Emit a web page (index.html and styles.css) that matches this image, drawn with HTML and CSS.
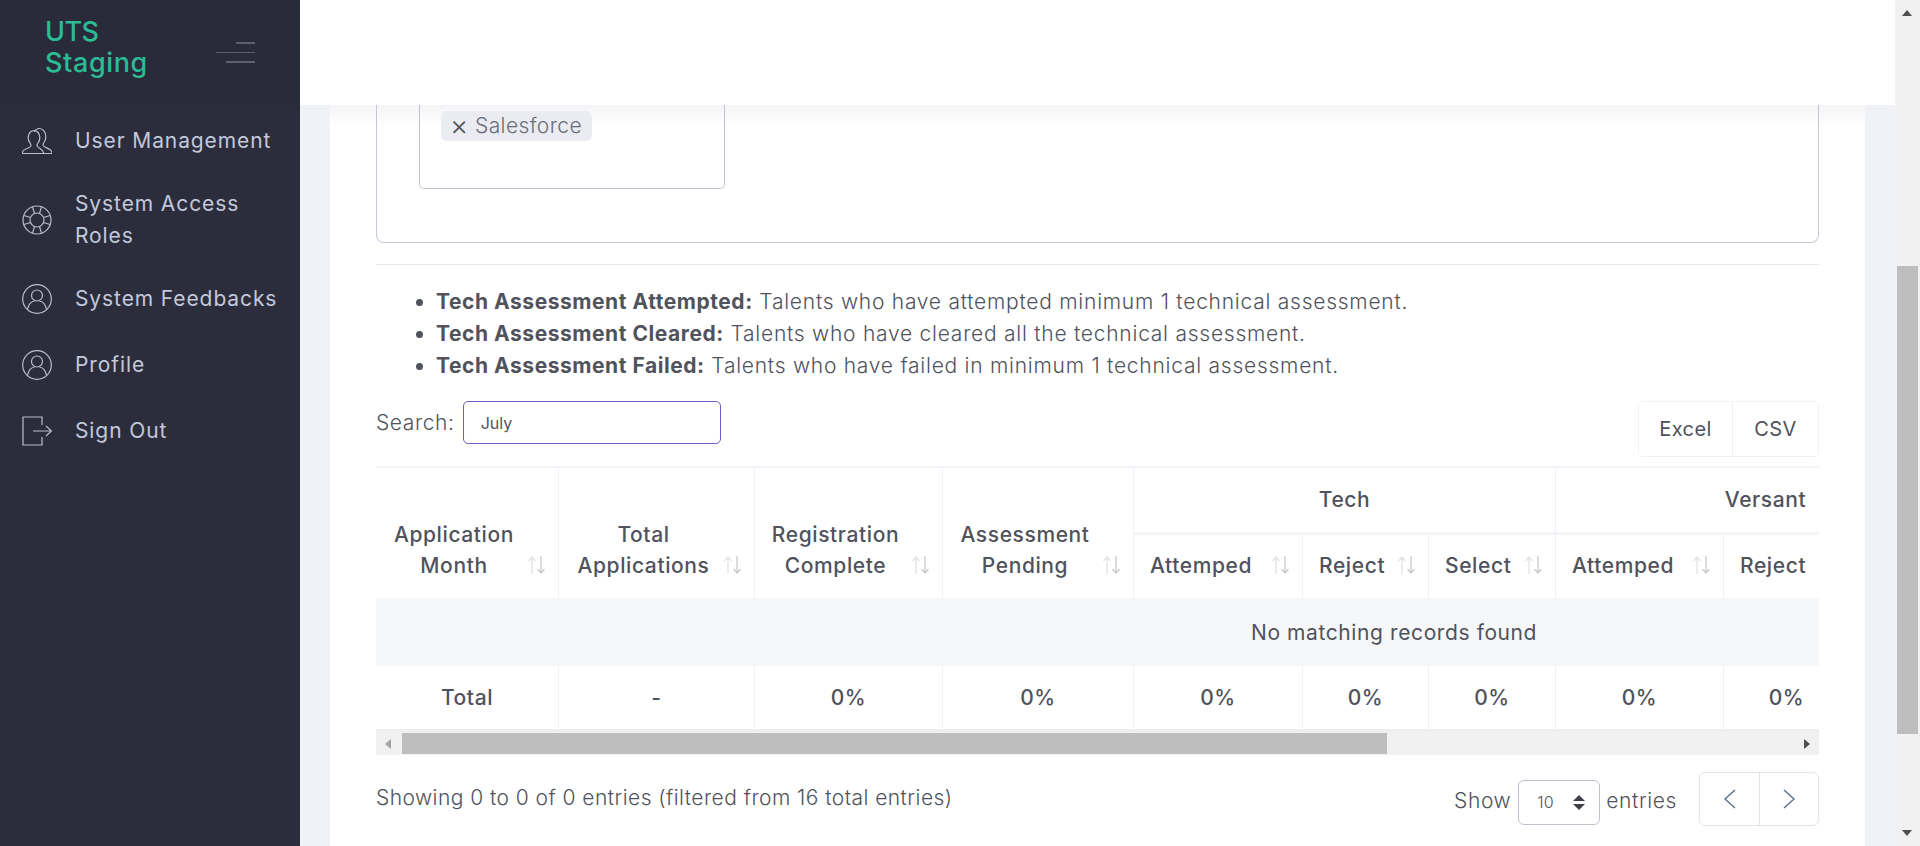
FILE: index.html
```html
<!DOCTYPE html>
<html lang="en">
<head>
    <meta charset="UTF-8">
    <title>UTS Staging</title>
    <link rel="stylesheet" href="styles.css">
</head>
<body>
    <svg class="defs" width="0" height="0">
        <symbol id="sort" viewBox="0 0 20 20">
            <path d="M5 19V2M1.5 6 5 2l3.500 4" fill="none" stroke="#e2e3e6" stroke-width="1.300"/>
            <path d="M14 1v17M10.500 14l3.500 4 3.500-4" fill="none" stroke="#c8c9cd" stroke-width="1.300"/>
        </symbol>
        <symbol id="user" viewBox="0 0 30 30">
            <circle cx="15" cy="15" r="14.300" fill="none" stroke="currentColor" stroke-width="1.200"/>
            <circle cx="15" cy="11.500" r="5.500" fill="none" stroke="currentColor" stroke-width="1.200"/>
            <path d="M5.500 25.500c1-5.500 4-8 7-8.500M24.500 25.500c-1-5.500-4-8-7-8.500" fill="none" stroke="currentColor" stroke-width="1.200"/>
        </symbol>
    </svg>

    <aside class="sidebar">
        <div class="brand">
            <div class="brand-name"><span class="brand-short">UTS</span><br>Staging</div>
            <div class="burger"><i class="b1"></i><i class="b2"></i><i class="b3"></i></div>
        </div>
        <nav class="nav">
            <a class="nav-item">
                <svg class="nav-icon" viewBox="0 0 30 30" fill="none" stroke="currentColor" stroke-width="1.200">
                    <path d="M.5 27.500h29.500v-1.500c-.5-3-7-4-8.500-6-.8-1.200-.3-2.500.5-3.500 1.200-1.500 1.800-3.500 1.800-6 0-4.500-2.800-8-6.300-8-2.200 0-4.200 1.300-5.300 3.400"/>
                    <path d="M.5 27.500V26c.5-3 6.500-3.500 8-5.500.8-1.200.3-2.500-.5-3.500-1.200-1.500-1.800-3.300-1.800-5.500C6.200 7.500 8.800 4.500 12 4.500s5.800 3 5.800 7c0 2.200-.6 4-1.800 5.500-.8 1-1.300 2.300-.5 3.500 1.500 2 5.500 2.500 6.500 7"/>
                </svg>
                <span>User Management</span>
            </a>
            <a class="nav-item">
                <svg class="nav-icon" viewBox="0 0 30 30" fill="none" stroke="currentColor" stroke-width="1.200">
                    <circle cx="15" cy="15" r="14"/>
                    <circle cx="15" cy="15" r="7"/>
                    <path d="M10.500 1.800 12.500 8.500M19.500 1.800 17.500 8.500M10.500 28.200 12.500 21.500M19.500 28.200 17.500 21.500M1.800 10.500 8.500 12.500M1.800 19.500 8.500 17.500M28.200 10.500 21.500 12.500M28.200 19.500 21.500 17.500"/>
                </svg>
                <span>System Access<br>Roles</span>
            </a>
            <a class="nav-item">
                <svg class="nav-icon"><use href="#user"/></svg>
                <span>System Feedbacks</span>
            </a>
            <a class="nav-item">
                <svg class="nav-icon"><use href="#user"/></svg>
                <span>Profile</span>
            </a>
            <a class="nav-item">
                <svg class="nav-icon" viewBox="0 0 30 30" fill="none" stroke="currentColor" stroke-width="1.200">
                    <path d="M20 9V1H1v28h19v-8"/>
                    <path d="M11 15h18M24 10l5.500 5-5.500 5"/>
                </svg>
                <span>Sign Out</span>
            </a>
        </nav>
    </aside>

    <div class="main">
        <header class="topbar"></header>
        <div class="content">
            <section class="card">
                <div class="filter-box">
                    <div class="multi-select">
                        <span class="chip"><span class="chip-x">×</span> Salesforce</span>
                    </div>
                </div>
                <hr class="rule">
                <ul class="legend">
                    <li><b>Tech Assessment Attempted:</b> Talents who have attempted minimum 1 technical assessment.</li>
                    <li><b>Tech Assessment Cleared:</b> Talents who have cleared all the technical assessment.</li>
                    <li><b>Tech Assessment Failed:</b> Talents who have failed in minimum 1 technical assessment.</li>
                </ul>

                <div class="toolbar">
                    <label class="search">Search:
                        <input class="search-input" type="text" value="July">
                    </label>
                    <div class="btn-group">
                        <button class="btn btn-excel">Excel</button>
                        <button class="btn">CSV</button>
                    </div>
                </div>

                <div class="table-wrap">
                    <table class="report">
                        <colgroup>
                            <col class="c183"><col class="c196"><col class="c188"><col class="c191">
                            <col class="c169"><col class="c126"><col class="c127">
                            <col class="c168"><col class="c126"><col class="c126">
                            <col class="c436">
                        </colgroup>
                        <thead>
                            <tr>
                                <th rowspan="2"><div class="th-in"><span>Application<br>Month</span><svg class="sort"><use href="#sort"/></svg></div></th>
                                <th rowspan="2"><div class="th-in"><span>Total<br>Applications</span><svg class="sort"><use href="#sort"/></svg></div></th>
                                <th rowspan="2"><div class="th-in"><span>Registration<br>Complete</span><svg class="sort"><use href="#sort"/></svg></div></th>
                                <th rowspan="2"><div class="th-in"><span>Assessment<br>Pending</span><svg class="sort"><use href="#sort"/></svg></div></th>
                                <th colspan="3" class="group">Tech</th>
                                <th colspan="3" class="group">Versant</th>
                                <th rowspan="2"></th>
                            </tr>
                            <tr>
                                <th class="sub"><div class="th-in"><span>Attemped</span><svg class="sort"><use href="#sort"/></svg></div></th>
                                <th class="sub"><div class="th-in"><span>Reject</span><svg class="sort"><use href="#sort"/></svg></div></th>
                                <th class="sub"><div class="th-in"><span>Select</span><svg class="sort"><use href="#sort"/></svg></div></th>
                                <th class="sub"><div class="th-in"><span>Attemped</span><svg class="sort"><use href="#sort"/></svg></div></th>
                                <th class="sub"><div class="th-in"><span>Reject</span><svg class="sort"><use href="#sort"/></svg></div></th>
                                <th class="sub"><div class="th-in"><span>Select</span><svg class="sort"><use href="#sort"/></svg></div></th>
                            </tr>
                        </thead>
                        <tbody>
                            <tr class="empty"><td colspan="11">No matching records found</td></tr>
                        </tbody>
                        <tfoot>
                            <tr>
                                <td>Total</td><td>-</td><td>0%</td><td>0%</td>
                                <td>0%</td><td>0%</td><td>0%</td>
                                <td>0%</td><td>0%</td><td>0%</td><td></td>
                            </tr>
                        </tfoot>
                    </table>
                </div>
                <div class="h-scroll">
                    <span class="arrow-left"></span>
                    <div class="h-thumb"></div>
                    <span class="arrow-right"></span>
                </div>

                <div class="foot">
                    <div class="info">Showing 0 to 0 of 0 entries (filtered from 16 total entries)</div>
                    <div class="foot-right">
                        <span>Show</span>
                        <div class="len-select"><span>10</span><span class="updown"><i class="up"></i><i class="down"></i></span></div>
                        <span>entries</span>
                        <div class="pager">
                            <a class="page-btn"><svg width="14" height="20" viewBox="0 0 14 20" fill="none" stroke="currentColor" stroke-width="1.400"><path d="M12 1 2 10l10 9"/></svg></a>
                            <a class="page-btn"><svg width="14" height="20" viewBox="0 0 14 20" fill="none" stroke="currentColor" stroke-width="1.400"><path d="m2 1 10 9-10 9"/></svg></a>
                        </div>
                    </div>
                </div>
            </section>
        </div>
    </div>

    <div class="v-scroll">
        <span class="arrow-up"></span>
        <div class="v-thumb"></div>
        <span class="arrow-down"></span>
    </div>
</body>
</html>
```

FILE: styles.css
```css
*{
    margin: 0;
    padding: 0;
    box-sizing: border-box;
}
html,body{
    height: 100%;
    overflow: hidden;
}
body{
    display: flex;
    background: #f1f2f8;
    color: #50525c;
    font-family: "Inter", "Noto Sans", sans-serif;
    font-size: 21px;
    letter-spacing: .6px;
    line-height: 32px;
}
.defs{
    position: absolute;
}

/* sidebar */
.sidebar{
    width: 300px;
    flex: none;
    background: #2c2d3c;
}
.brand{
    height: 105px;
    padding: 16px 45px 0;
    display: flex;
    justify-content: space-between;
    background: #2a2b3a;
}
.brand-name{
    color: #2bbb95;
    font-size: 27px;
    line-height: 31px;
    font-weight: 500;
    letter-spacing: .6px;
}
.brand-short{
    letter-spacing: -.5px;
}
.burger{
    width: 39px;
    margin: 26px 0 0 auto;
    display: flex;
    flex-direction: column;
    align-items: flex-end;
}
.burger i{
    display: block;
    background: #5d5e6e;
    margin-bottom: 8px;
}
.b1{
    width: 19px;
    height: 2px;
}
.b2{
    width: 39px;
    height: 1px;
}
.b3{
    width: 29px;
    height: 2px;
}
.nav{
    padding-top: 3px;
}
.nav-item{
    min-height: 66px;
    padding: 14px 0 14px 22px;
    display: flex;
    align-items: center;
    gap: 23px;
    color: #c3c8da;
    font-size: 21px;
    letter-spacing: .9px;
    line-height: 32px;
}
.nav-icon{
    width: 30px;
    height: 30px;
    flex: none;
    color: #b9bdcf;
}

/* main column */
.main{
    flex: 1;
    min-width: 0;
    display: flex;
    flex-direction: column;
}
.topbar{
    height: 105px;
    flex: none;
    background: #fff;
}
.content{
    flex: 1;
    overflow: hidden;
    padding: 0 30px;
}
.card{
    height: 100%;
    padding: 0 46px;
    background: linear-gradient(#f5f5f7, #fff 22px);
}
.filter-box{
    height: 138px;
    padding: 0 42px;
    border: 1px solid #c5c6d6;
    border-top: none;
    border-radius: 0 0 8px 8px;
}
.multi-select{
    width: 306px;
    height: 84px;
    padding: 5px 0 0 21px;
    border: 1px solid #bfc1cf;
    border-top: none;
    border-radius: 0 0 5px 5px;
}
.chip{
    display: inline-block;
    width: 151px;
    height: 30px;
    padding: 0 0 0 9px;
    background: #ebecf2;
    border-radius: 6px;
    color: #6a6c78;
    font-size: 21px;
    font-weight: 300;
    letter-spacing: .4px;
    line-height: 28px;
    white-space: nowrap;
}
.chip-x{
    color: #50525c;
    font-size: 28px;
    vertical-align: -2px;
}
.rule{
    margin-top: 21px;
    border: none;
    border-top: 1px solid #e6e7eb;
}
.legend{
    margin-top: 21px;
    padding-left: 60px;
    font-weight: 300;
    letter-spacing: .75px;
}
.legend b{
    font-weight: 700;
    letter-spacing: .55px;
}

/* search and export */
.toolbar{
    margin-top: 19px;
    display: flex;
    justify-content: space-between;
    align-items: flex-start;
}
.search{
    display: flex;
    align-items: center;
    gap: 8px;
    font-weight: 300;
}
.search-input{
    width: 258px;
    height: 43px;
    padding: 0 17px;
    border: 1px solid #6b5fc7;
    border-radius: 5px;
    outline: none;
    color: #50525c;
    font: 400 16px "Inter", sans-serif;
}
.btn-group{
    width: 181px;
    height: 56px;
    display: flex;
    border: 1px solid #f0f0f5;
    border-radius: 5px;
}
.btn{
    flex: 1;
    background: #fff;
    border: none;
    color: #50525c;
    font: 400 20px "Inter", sans-serif;
    letter-spacing: .4px;
}
.btn-excel{
    flex: none;
    width: 94px;
    border-right: 1px solid #f0f0f5;
}

/* table */
.table-wrap{
    margin-top: 9px;
    overflow: hidden;
}
.report{
    width: 2036px;
    table-layout: fixed;
    border-collapse: separate;
    border-spacing: 0;
    border-top: 2px solid #f3f3f9;
    font-weight: 500;
}
.c183{ width: 183px; }
.c196{ width: 196px; }
.c188{ width: 188px; }
.c191{ width: 191px; }
.c169{ width: 169px; }
.c126{ width: 126px; }
.c127{ width: 127px; }
.c168{ width: 168px; }
.c436{ width: 436px; }
.report th{
    font-weight: 500;
    vertical-align: bottom;
    border-right: 1px solid #f1f1f4;
    padding: 0 11px 17px 16px;
    line-height: 31px;
}
.report .group{
    height: 67px;
    vertical-align: middle;
    padding: 0 0 2px;
    border-bottom: 3px solid #f3f3f8;
}
.report .sub{
    height: 63px;
}
.th-in{
    display: flex;
    align-items: flex-end;
    text-align: center;
}
.th-in span{
    flex: 1;
}
.sort{
    width: 20px;
    height: 20px;
    flex: none;
    margin: 0 0 6px 11px;
}
.sub .th-in span{
    flex: none;
}
.sub .th-in{
    justify-content: space-between;
}
.sub .sort{
    margin-left: 0;
}
.report td{
    height: 63px;
    text-align: center;
    border-right: 1px solid #f1f1f4;
}
.empty td{
    height: 68px;
    padding-top: 2px;
    background: #f6f7f9;
    border-right: none;
    font-weight: 400;
}

/* fake scrollbars */
.h-scroll{
    height: 26px;
    display: flex;
    align-items: center;
    background: #f1f1f1;
    border-top: 3px solid #eeeeee;
}
.h-thumb{
    width: 985px;
    height: 21px;
    background: #bebebe;
}
.arrow-left{
    width: 26px;
    padding-left: 9px;
}
.arrow-left::before{
    content: "";
    display: block;
    width: 0;
    border: 5px solid transparent;
    border-left: none;
    border-right: 6px solid #a3a3a3;
}
.arrow-right{
    margin-left: auto;
    margin-right: 9px;
    width: 0;
    border: 5px solid transparent;
    border-right: none;
    border-left: 6px solid #505050;
}
.v-scroll{
    width: 25px;
    flex: none;
    position: relative;
    background: #f1f1f1;
}
.arrow-up{
    position: absolute;
    top: 10px;
    left: 7px;
    border: 5px solid transparent;
    border-top: none;
    border-bottom: 6px solid #505050;
}
.arrow-down{
    position: absolute;
    bottom: 10px;
    left: 7px;
    border: 5px solid transparent;
    border-bottom: none;
    border-top: 6px solid #505050;
}
.v-thumb{
    position: absolute;
    top: 266px;
    left: 2px;
    width: 21px;
    height: 468px;
    background: #bebebe;
}

/* footer */
.foot{
    margin-top: 16px;
    display: flex;
    justify-content: space-between;
    align-items: flex-start;
    font-weight: 300;
    letter-spacing: .6px;
}
.info{
    margin-top: 11px;
    letter-spacing: .45px;
}
.foot-right{
    display: flex;
    align-items: center;
}
.len-select{
    width: 82px;
    height: 45px;
    margin: 7px 6px 0 7px;
    padding: 0 14px 0 18px;
    display: flex;
    justify-content: space-between;
    align-items: center;
    border: 1px solid #bfc1cf;
    border-radius: 6px;
    font-size: 16px;
    font-weight: 300;
    letter-spacing: 0;
}
.updown i{
    display: block;
    width: 0;
    border: 6px solid transparent;
}
.up{
    border-top: none !important;
    border-bottom: 6px solid #3f4048 !important;
    margin-bottom: 3px;
}
.down{
    border-bottom: none !important;
    border-top: 6px solid #3f4048 !important;
}
.foot-right > span{
    margin-top: 5px;
}
.pager{
    width: 120px;
    height: 54px;
    margin: 1px 0 0 22px;
    display: flex;
    border: 1px solid #e4e5ea;
    border-radius: 6px;
}
.page-btn{
    width: 59px;
    display: flex;
    align-items: center;
    justify-content: center;
    color: #5b6f8d;
}
.page-btn + .page-btn{
    border-left: 1px solid #e4e5ea;
}
```
